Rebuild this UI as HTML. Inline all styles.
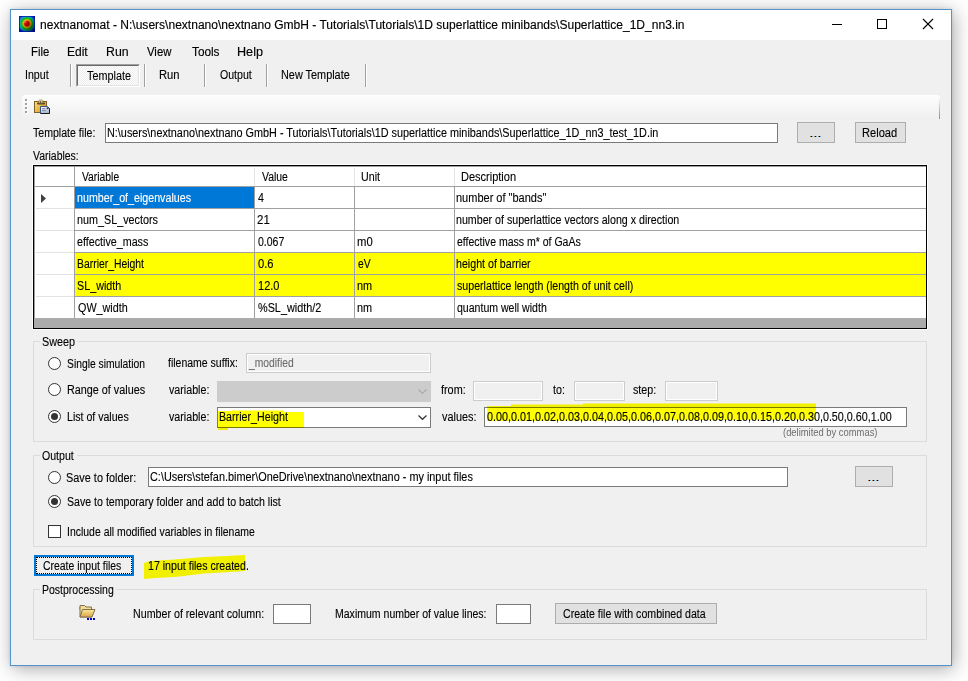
<!DOCTYPE html>
<html><head><meta charset="utf-8"><style>
html,body{margin:0;padding:0;width:968px;height:681px;overflow:hidden;background:#fff}
body>div,body>svg{position:absolute}
.t{font-family:"Liberation Sans",sans-serif;line-height:13px;white-space:pre;transform-origin:0 0}
.s{-webkit-text-stroke:0.12px currentColor}
.s2{-webkit-text-stroke:0.15px currentColor}
</style></head><body>
<div style="left:10px;top:9px;width:942px;height:657px;background:#f0f0f0;box-sizing:border-box;border:1px solid #5593cc;box-shadow:2px 3px 18px rgba(0,0,0,0.34), 0 0 3px rgba(0,0,0,0.12)"></div>
<div style="left:11px;top:10px;width:940px;height:30px;background:#fff"></div>
<svg style="left:19px;top:16px" width="16" height="16" viewBox="0 0 16 16">
<defs><radialGradient id="ig" cx="0.5" cy="0.48" r="0.62">
<stop offset="0" stop-color="#e00000"/><stop offset="0.22" stop-color="#d00000"/><stop offset="0.38" stop-color="#f0c000"/>
<stop offset="0.54" stop-color="#10c010"/><stop offset="0.74" stop-color="#00b0c0"/><stop offset="0.9" stop-color="#0020e0"/><stop offset="1" stop-color="#0010c0"/></radialGradient>
<linearGradient id="sh" x1="0" y1="0" x2="1" y2="1"><stop offset="0" stop-color="#fff" stop-opacity="0.3"/><stop offset="0.35" stop-color="#000" stop-opacity="0"/><stop offset="1" stop-color="#000" stop-opacity="0.75"/></linearGradient>
<radialGradient id="hl" cx="0.38" cy="0.36" r="0.14"><stop offset="0" stop-color="#ff8060" stop-opacity="0.8"/><stop offset="1" stop-color="#ff8060" stop-opacity="0"/></radialGradient></defs>
<rect x="0" y="0" width="16" height="16" fill="url(#ig)"/><rect x="0" y="0" width="16" height="16" fill="url(#sh)"/><rect x="0" y="0" width="16" height="16" fill="url(#hl)"/>
<rect x="0.5" y="0.5" width="15" height="15" fill="none" stroke="#0010b0" stroke-opacity="0.7"/></svg>
<div style="left:832px;top:24px;width:10px;height:1px;background:#000"></div>
<div style="left:877px;top:19px;width:10px;height:10px;box-sizing:border-box;border:1px solid #000"></div>
<svg style="left:922px;top:18px" width="12" height="12" viewBox="0 0 12 12"><path d="M1 1L11 11M11 1L1 11" stroke="#000" stroke-width="1.1" fill="none"/></svg>
<div style="left:70px;top:64px;width:1px;height:23px;background:#a0a0a0"></div>
<div style="left:71px;top:64px;width:1px;height:23px;background:#fff"></div>
<div style="left:144px;top:64px;width:1px;height:23px;background:#a0a0a0"></div>
<div style="left:145px;top:64px;width:1px;height:23px;background:#fff"></div>
<div style="left:204px;top:64px;width:1px;height:23px;background:#a0a0a0"></div>
<div style="left:205px;top:64px;width:1px;height:23px;background:#fff"></div>
<div style="left:266px;top:64px;width:1px;height:23px;background:#a0a0a0"></div>
<div style="left:267px;top:64px;width:1px;height:23px;background:#fff"></div>
<div style="left:365px;top:64px;width:1px;height:23px;background:#a0a0a0"></div>
<div style="left:366px;top:64px;width:1px;height:23px;background:#fff"></div>
<div style="left:76px;top:64px;width:64px;height:23px;box-sizing:border-box;border-top:1px solid #a0a0a0;border-left:1px solid #a0a0a0;border-right:1px solid #fff;border-bottom:1px solid #fff;"></div>
<div style="left:77px;top:65px;width:62px;height:21px;box-sizing:border-box;border-top:1px solid #696969;border-left:1px solid #696969;border-right:1px solid #e3e3e3;border-bottom:1px solid #e3e3e3;background-color:#f8f8f8;background-image:repeating-conic-gradient(#ffffff 0 25%, #ececec 0 50%);background-size:2px 2px"></div>
<div style="left:22px;top:95px;width:918px;height:24px;background:linear-gradient(#fdfdfd,#f5f5f5 60%,#efefef);border-radius:3px 3px 0 0"></div>
<div style="left:939px;top:98px;width:1px;height:21px;background:linear-gradient(rgba(128,128,128,0),#8c8c8c)"></div>
<div style="left:26px;top:100px;width:2px;height:2px;background:#fff"></div>
<div style="left:25px;top:99px;width:2px;height:2px;background:#a0a0a0"></div>
<div style="left:26px;top:104px;width:2px;height:2px;background:#fff"></div>
<div style="left:25px;top:103px;width:2px;height:2px;background:#a0a0a0"></div>
<div style="left:26px;top:108px;width:2px;height:2px;background:#fff"></div>
<div style="left:25px;top:107px;width:2px;height:2px;background:#a0a0a0"></div>
<div style="left:26px;top:112px;width:2px;height:2px;background:#fff"></div>
<div style="left:25px;top:111px;width:2px;height:2px;background:#a0a0a0"></div>
<svg style="left:33px;top:98px" width="18" height="17" viewBox="0 0 18 17">
<defs><linearGradient id="cg" x1="0" y1="0" x2="1" y2="0.6"><stop offset="0" stop-color="#f6e08a"/><stop offset="0.55" stop-color="#e8b840"/><stop offset="1" stop-color="#d89a28"/></linearGradient>
<linearGradient id="dg" x1="0" y1="0" x2="0.3" y2="1"><stop offset="0" stop-color="#ffffff"/><stop offset="1" stop-color="#a8b8d0"/></linearGradient></defs>
<rect x="1.5" y="3.5" width="12" height="11" fill="url(#cg)" stroke="#806028"/>
<rect x="4" y="4.6" width="8" height="2" rx="0.8" fill="#5a4a28"/>
<rect x="6" y="2" width="3.6" height="3" rx="0.5" fill="#f2e49a" stroke="#907040" stroke-width="0.6"/>
<circle cx="7.6" cy="4" r="0.8" fill="#303030"/>
<path d="M7.5 15.5V8.5h7l2 2v5z" fill="url(#dg)" stroke="#3a5080"/>
<path d="M16.5 10.5v5h-9" fill="none" stroke="#1a1a1a"/>
<circle cx="14.6" cy="10.2" r="1" fill="#2a3a60"/>
<path d="M9 10.6h3.5M9 12.6h4" stroke="#6880a8" stroke-width="0.9"/>
</svg>
<div style="left:105px;top:123px;width:673px;height:20px;box-sizing:border-box;border:1px solid #7a7a7a;background:#fff"></div>
<div style="left:797px;top:122px;width:38px;height:21px;box-sizing:border-box;border:1px solid #adadad;background:#e1e1e1"></div>
<div style="left:810px;top:136px;width:1px;height:1px;background:#b07830"></div>
<div style="left:811px;top:136px;width:1px;height:1px;background:#000"></div>
<div style="left:812px;top:136px;width:1px;height:1px;background:#60a8f0"></div>
<div style="left:814px;top:136px;width:1px;height:1px;background:#b07830"></div>
<div style="left:815px;top:136px;width:1px;height:1px;background:#000"></div>
<div style="left:816px;top:136px;width:1px;height:1px;background:#60a8f0"></div>
<div style="left:818px;top:136px;width:1px;height:1px;background:#b07830"></div>
<div style="left:819px;top:136px;width:1px;height:1px;background:#000"></div>
<div style="left:820px;top:136px;width:1px;height:1px;background:#60a8f0"></div>
<div style="left:855px;top:122px;width:51px;height:21px;box-sizing:border-box;border:1px solid #adadad;background:#e1e1e1"></div>
<div style="left:33px;top:165px;width:894px;height:164px;box-sizing:border-box;border:1px solid #000;background:#fff"></div>
<div style="left:32px;top:164px;width:896px;height:166px;box-sizing:border-box;border:1px solid #fff"></div>
<div style="left:34px;top:166px;width:892px;height:1px;background:#a0a0a0"></div>
<div style="left:34px;top:166px;width:1px;height:162px;background:#a0a0a0"></div>
<div style="left:34px;top:186px;width:892px;height:1px;background:#a0a0a0"></div>
<div style="left:254px;top:168px;width:1px;height:18px;background:#e5e5e5"></div>
<div style="left:354px;top:168px;width:1px;height:18px;background:#e5e5e5"></div>
<div style="left:454px;top:168px;width:1px;height:18px;background:#e5e5e5"></div>
<div style="left:74px;top:166px;width:1px;height:152px;background:#a0a0a0"></div>
<div style="left:75px;top:187px;width:179px;height:21px;background:#0078d7"></div>
<div style="left:75px;top:208px;width:851px;height:1px;background:#a0a0a0"></div>
<div style="left:36px;top:208px;width:38px;height:1px;background:#e3e3e3"></div>
<div style="left:254px;top:187px;width:1px;height:22px;background:#a0a0a0"></div>
<div style="left:354px;top:187px;width:1px;height:22px;background:#a0a0a0"></div>
<div style="left:454px;top:187px;width:1px;height:22px;background:#a0a0a0"></div>
<div style="left:75px;top:230px;width:851px;height:1px;background:#a0a0a0"></div>
<div style="left:36px;top:230px;width:38px;height:1px;background:#e3e3e3"></div>
<div style="left:254px;top:209px;width:1px;height:22px;background:#a0a0a0"></div>
<div style="left:354px;top:209px;width:1px;height:22px;background:#a0a0a0"></div>
<div style="left:454px;top:209px;width:1px;height:22px;background:#a0a0a0"></div>
<div style="left:75px;top:252px;width:851px;height:1px;background:#a0a0a0"></div>
<div style="left:36px;top:252px;width:38px;height:1px;background:#e3e3e3"></div>
<div style="left:254px;top:231px;width:1px;height:22px;background:#a0a0a0"></div>
<div style="left:354px;top:231px;width:1px;height:22px;background:#a0a0a0"></div>
<div style="left:454px;top:231px;width:1px;height:22px;background:#a0a0a0"></div>
<div style="left:75px;top:253px;width:851px;height:21px;background:#ffff00"></div>
<div style="left:75px;top:274px;width:851px;height:1px;background:#a0a0a0"></div>
<div style="left:36px;top:274px;width:38px;height:1px;background:#e3e3e3"></div>
<div style="left:254px;top:253px;width:1px;height:22px;background:#a0a0a0"></div>
<div style="left:354px;top:253px;width:1px;height:22px;background:#a0a0a0"></div>
<div style="left:454px;top:253px;width:1px;height:22px;background:#a0a0a0"></div>
<div style="left:75px;top:275px;width:851px;height:21px;background:#ffff00"></div>
<div style="left:75px;top:296px;width:851px;height:1px;background:#a0a0a0"></div>
<div style="left:36px;top:296px;width:38px;height:1px;background:#e3e3e3"></div>
<div style="left:254px;top:275px;width:1px;height:22px;background:#a0a0a0"></div>
<div style="left:354px;top:275px;width:1px;height:22px;background:#a0a0a0"></div>
<div style="left:454px;top:275px;width:1px;height:22px;background:#a0a0a0"></div>
<div style="left:75px;top:318px;width:851px;height:1px;background:#a0a0a0"></div>
<div style="left:254px;top:297px;width:1px;height:22px;background:#a0a0a0"></div>
<div style="left:354px;top:297px;width:1px;height:22px;background:#a0a0a0"></div>
<div style="left:454px;top:297px;width:1px;height:22px;background:#a0a0a0"></div>
<div style="left:34px;top:318px;width:892px;height:10px;background:#ababab"></div>
<svg style="left:40px;top:193px" width="8" height="11" viewBox="0 0 8 11"><path d="M1 1L6 5.5L1 10z" fill="#404040"/></svg>
<div style="left:33px;top:341px;width:894px;height:101px;box-sizing:border-box;border:1px solid #dcdcdc"></div>
<div style="left:40px;top:339px;width:37px;height:5px;background:#f0f0f0"></div>
<svg style="left:48.0px;top:357.0px" width="13" height="13" viewBox="0 0 13 13"><circle cx="6.5" cy="6.5" r="6" fill="#fff" stroke="#333" stroke-width="1"/></svg>
<svg style="left:48.0px;top:383.0px" width="13" height="13" viewBox="0 0 13 13"><circle cx="6.5" cy="6.5" r="6" fill="#fff" stroke="#333" stroke-width="1"/></svg>
<svg style="left:48.0px;top:410.0px" width="13" height="13" viewBox="0 0 13 13"><circle cx="6.5" cy="6.5" r="6" fill="#fff" stroke="#333" stroke-width="1"/><circle cx="6.5" cy="6.5" r="3.5" fill="#333"/></svg>
<div style="left:246px;top:353px;width:185px;height:20px;box-sizing:border-box;border:1px solid #cccccc;background:#f0f0f0;box-shadow:inset 0 0 0 1px #fff"></div>
<div style="left:217px;top:381px;width:214px;height:21px;background:#cccccc"></div>
<svg style="left:417px;top:387px" width="11" height="8" viewBox="0 0 11 8"><path d="M1.5 2.5L5.5 6.3L9.5 2.5" stroke="#a8a8a8" stroke-width="1.1" fill="none"/></svg>
<div style="left:217px;top:407px;width:214px;height:21px;box-sizing:border-box;border:1px solid #7a7a7a;background:#fff"></div>
<svg style="left:417px;top:413px" width="11" height="8" viewBox="0 0 11 8"><path d="M1.5 2.5L5.5 6.3L9.5 2.5" stroke="#333" stroke-width="1.2" fill="none"/></svg>
<div style="left:473px;top:381px;width:70px;height:20px;box-sizing:border-box;border:1px solid #cccccc;background:#f0f0f0;box-shadow:inset 0 0 0 1px #fff"></div>
<div style="left:574px;top:381px;width:51px;height:20px;box-sizing:border-box;border:1px solid #cccccc;background:#f0f0f0;box-shadow:inset 0 0 0 1px #fff"></div>
<div style="left:665px;top:381px;width:53px;height:20px;box-sizing:border-box;border:1px solid #cccccc;background:#f0f0f0;box-shadow:inset 0 0 0 1px #fff"></div>
<div style="left:484px;top:407px;width:423px;height:20px;box-sizing:border-box;border:1px solid #7a7a7a;background:#fff"></div>
<div style="left:33px;top:455px;width:894px;height:92px;box-sizing:border-box;border:1px solid #dcdcdc"></div>
<div style="left:40px;top:453px;width:37px;height:5px;background:#f0f0f0"></div>
<svg style="left:48.0px;top:471.0px" width="13" height="13" viewBox="0 0 13 13"><circle cx="6.5" cy="6.5" r="6" fill="#fff" stroke="#333" stroke-width="1"/></svg>
<svg style="left:48.0px;top:495.0px" width="13" height="13" viewBox="0 0 13 13"><circle cx="6.5" cy="6.5" r="6" fill="#fff" stroke="#333" stroke-width="1"/><circle cx="6.5" cy="6.5" r="3.5" fill="#333"/></svg>
<div style="left:148px;top:467px;width:640px;height:20px;box-sizing:border-box;border:1px solid #7a7a7a;background:#fff"></div>
<div style="left:855px;top:466px;width:38px;height:21px;box-sizing:border-box;border:1px solid #adadad;background:#e1e1e1"></div>
<div style="left:868px;top:480px;width:1px;height:1px;background:#b07830"></div>
<div style="left:869px;top:480px;width:1px;height:1px;background:#000"></div>
<div style="left:870px;top:480px;width:1px;height:1px;background:#60a8f0"></div>
<div style="left:872px;top:480px;width:1px;height:1px;background:#b07830"></div>
<div style="left:873px;top:480px;width:1px;height:1px;background:#000"></div>
<div style="left:874px;top:480px;width:1px;height:1px;background:#60a8f0"></div>
<div style="left:876px;top:480px;width:1px;height:1px;background:#b07830"></div>
<div style="left:877px;top:480px;width:1px;height:1px;background:#000"></div>
<div style="left:878px;top:480px;width:1px;height:1px;background:#60a8f0"></div>
<div style="left:48px;top:525px;width:13px;height:13px;box-sizing:border-box;border:1px solid #333;background:#fff"></div>
<div style="left:34px;top:555px;width:100px;height:21px;box-sizing:border-box;border:2px solid #0078d7;background:#f0f0f0"></div>
<div style="left:36px;top:557px;width:96px;height:17px;box-sizing:border-box;border:1px dotted #000"></div>
<div style="left:33px;top:589px;width:894px;height:51px;box-sizing:border-box;border:1px solid #dcdcdc"></div>
<div style="left:40px;top:587px;width:76px;height:5px;background:#f0f0f0"></div>
<svg style="left:79px;top:604px" width="18" height="18" viewBox="0 0 18 18">
<defs><linearGradient id="fg" x1="0" y1="0" x2="0" y2="1"><stop offset="0" stop-color="#fbe7a0"/><stop offset="1" stop-color="#dca640"/></linearGradient></defs>
<path d="M1 1.5h4.5l1.5 1.5h5.5v2.5h-11.5z" fill="#f4dc90" stroke="#807050"/>
<path d="M1 3v10h11.5" fill="#f6e4a0" stroke="#807050"/>
<path d="M3.5 5.5h12.5l-3 7.5h-12z" fill="url(#fg)" stroke="#807050"/>
<rect x="8" y="14" width="2" height="2" fill="#0000c0"/><rect x="11" y="14" width="2" height="2" fill="#0000c0"/><rect x="14" y="14" width="2" height="2" fill="#0000c0"/>
</svg>
<div style="left:273px;top:604px;width:38px;height:20px;box-sizing:border-box;border:1px solid #7a7a7a;background:#fff"></div>
<div style="left:496px;top:604px;width:35px;height:20px;box-sizing:border-box;border:1px solid #7a7a7a;background:#fff"></div>
<div style="left:555px;top:603px;width:162px;height:21px;box-sizing:border-box;border:1px solid #adadad;background:#e1e1e1"></div>
<div class="t s2" style="left:40.00px;top:19px;font-size:12px;color:#000;transform:scaleX(1.0031);">nextnanomat - N:\users\nextnano\nextnano GmbH - Tutorials\Tutorials\1D superlattice minibands\Superlattice_1D_nn3.in</div>
<div class="t s2" style="left:31.06px;top:46px;font-size:12px;color:#000;transform:scaleX(0.9444);">File</div>
<div class="t s2" style="left:67.00px;top:46px;font-size:12px;color:#000;">Edit</div>
<div class="t s2" style="left:105.97px;top:46px;font-size:12px;color:#000;transform:scaleX(1.0250);">Run</div>
<div class="t s2" style="left:147.00px;top:46px;font-size:12px;color:#000;transform:scaleX(0.9462);">View</div>
<div class="t s2" style="left:191.50px;top:46px;font-size:12px;color:#000;transform:scaleX(0.9821);">Tools</div>
<div class="t s2" style="left:237.45px;top:46px;font-size:12px;color:#000;transform:scaleX(1.0522);">Help</div>
<div class="t s" style="left:25.12px;top:69px;font-size:12px;color:#000;transform:scaleX(0.8846);">Input</div>
<div class="t s" style="left:87.00px;top:70px;font-size:12px;color:#000;transform:scaleX(0.9021);">Template</div>
<div class="t s" style="left:159.06px;top:69px;font-size:12px;color:#000;transform:scaleX(0.9350);">Run</div>
<div class="t s" style="left:219.50px;top:69px;font-size:12px;color:#000;transform:scaleX(0.8806);">Output</div>
<div class="t s" style="left:281.09px;top:69px;font-size:12px;color:#000;transform:scaleX(0.9067);">New Template</div>
<div class="t s" style="left:33.00px;top:127px;font-size:12px;color:#000;transform:scaleX(0.8814);">Template file:</div>
<div class="t s" style="left:107.10px;top:127px;font-size:12px;color:#000;transform:scaleX(0.9031);">N:\users\nextnano\nextnano GmbH - Tutorials\Tutorials\1D superlattice minibands\Superlattice_1D_nn3_test_1D.in</div>
<div class="t s" style="left:862.08px;top:127px;font-size:12px;color:#000;transform:scaleX(0.9250);">Reload</div>
<div class="t s" style="left:33.00px;top:150px;font-size:12px;color:#000;transform:scaleX(0.8712);">Variables:</div>
<div class="t s" style="left:76.51px;top:192px;font-size:12px;color:#fff;transform:scaleX(0.8898);">number_of_eigenvalues</div>
<div class="t s" style="left:257.80px;top:192px;font-size:12px;color:#000;transform:scaleX(0.8900);">4</div>
<div class="t s" style="left:456.38px;top:192px;font-size:12px;color:#000;transform:scaleX(0.9165);">number of &quot;bands&quot;</div>
<div class="t s" style="left:76.50px;top:214px;font-size:12px;color:#000;transform:scaleX(0.8989);">num_SL_vectors</div>
<div class="t s" style="left:256.84px;top:214px;font-size:12px;color:#000;transform:scaleX(0.9583);">21</div>
<div class="t s" style="left:456.41px;top:214px;font-size:12px;color:#000;transform:scaleX(0.8880);">number of superlattice vectors along x direction</div>
<div class="t s" style="left:77.40px;top:236px;font-size:12px;color:#000;transform:scaleX(0.8937);">effective_mass</div>
<div class="t s" style="left:258.20px;top:236px;font-size:12px;color:#000;transform:scaleX(0.8767);">0.067</div>
<div class="t s" style="left:356.96px;top:236px;font-size:12px;color:#000;transform:scaleX(0.9400);">m0</div>
<div class="t s" style="left:457.30px;top:236px;font-size:12px;color:#000;transform:scaleX(0.8766);">effective mass m* of GaAs</div>
<div class="t s" style="left:77.33px;top:258px;font-size:12px;color:#000;transform:scaleX(0.8658);">Barrier_Height</div>
<div class="t s" style="left:258.20px;top:258px;font-size:12px;color:#000;transform:scaleX(0.9313);">0.6</div>
<div class="t s" style="left:357.90px;top:258px;font-size:12px;color:#000;transform:scaleX(0.8667);">eV</div>
<div class="t s" style="left:456.41px;top:258px;font-size:12px;color:#000;transform:scaleX(0.8880);">height of barrier</div>
<div class="t s" style="left:77.30px;top:280px;font-size:12px;color:#000;transform:scaleX(0.8958);">SL_width</div>
<div class="t s" style="left:257.68px;top:280px;font-size:12px;color:#000;transform:scaleX(0.9182);">12.0</div>
<div class="t s" style="left:356.99px;top:280px;font-size:12px;color:#000;transform:scaleX(0.9067);">nm</div>
<div class="t s" style="left:457.30px;top:280px;font-size:12px;color:#000;transform:scaleX(0.8869);">superlattice length (length of unit cell)</div>
<div class="t s" style="left:77.60px;top:302px;font-size:12px;color:#000;transform:scaleX(0.8982);">QW_width</div>
<div class="t s" style="left:258.00px;top:302px;font-size:12px;color:#000;transform:scaleX(0.9029);">%SL_width/2</div>
<div class="t s" style="left:356.99px;top:302px;font-size:12px;color:#000;transform:scaleX(0.9067);">nm</div>
<div class="t s" style="left:457.30px;top:302px;font-size:12px;color:#000;transform:scaleX(0.8794);">quantum well width</div>
<div class="t s" style="left:82.00px;top:171px;font-size:12px;color:#000;transform:scaleX(0.8605);">Variable</div>
<div class="t s" style="left:262.30px;top:171px;font-size:12px;color:#000;transform:scaleX(0.8700);">Value</div>
<div class="t s" style="left:361.31px;top:171px;font-size:12px;color:#000;transform:scaleX(0.8900);">Unit</div>
<div class="t s" style="left:460.78px;top:171px;font-size:12px;color:#000;transform:scaleX(0.9172);">Description</div>
<div class="t s" style="left:41.60px;top:336px;font-size:12px;color:#000;transform:scaleX(0.9000);">Sweep</div>
<div class="t s" style="left:66.64px;top:358px;font-size:12px;color:#000;transform:scaleX(0.8596);">Single simulation</div>
<div class="t s" style="left:66.60px;top:384px;font-size:12px;color:#000;transform:scaleX(0.9000);">Range of values</div>
<div class="t s" style="left:66.62px;top:411px;font-size:12px;color:#000;transform:scaleX(0.8812);">List of values</div>
<div class="t s" style="left:168.20px;top:357px;font-size:12px;color:#000;transform:scaleX(0.8747);">filename suffix:</div>
<div class="t s" style="left:249.10px;top:357px;font-size:12px;color:#6d6d6d;transform:scaleX(0.8588);">_modified</div>
<div class="t s" style="left:169.00px;top:384px;font-size:12px;color:#000;transform:scaleX(0.8909);">variable:</div>
<div class="t s" style="left:169.00px;top:411px;font-size:12px;color:#000;transform:scaleX(0.8909);">variable:</div>
<div class="t s" style="left:219.11px;top:411px;font-size:12px;color:#000;transform:scaleX(0.8900);">Barrier_Height</div>
<div class="t s" style="left:441.00px;top:384px;font-size:12px;color:#000;transform:scaleX(0.9038);">from:</div>
<div class="t s" style="left:553.40px;top:384px;font-size:12px;color:#000;transform:scaleX(0.8900);">to:</div>
<div class="t s" style="left:632.60px;top:384px;font-size:12px;color:#000;transform:scaleX(0.8900);">step:</div>
<div class="t s" style="left:441.70px;top:411px;font-size:12px;color:#000;transform:scaleX(0.9054);">values:</div>
<div class="t s" style="left:487.00px;top:411px;font-size:12px;color:#000;transform:scaleX(0.8989);">0.00,0.01,0.02,0.03,0.04,0.05,0.06,0.07,0.08,0.09,0.10,0.15,0.20,0.30,0.50,0.60,1.00</div>
<div class="t" style="left:783.06px;top:426px;font-size:10px;color:#6d6d6d;transform:scaleX(0.9394);">(delimited by commas)</div>
<div class="t s" style="left:41.50px;top:450px;font-size:12px;color:#000;transform:scaleX(0.8806);">Output</div>
<div class="t s" style="left:66.39px;top:472px;font-size:12px;color:#000;transform:scaleX(0.9080);">Save to folder:</div>
<div class="t s" style="left:149.59px;top:471px;font-size:12px;color:#000;transform:scaleX(0.9065);">C:\Users\stefan.bimer\OneDrive\nextnano\nextnano - my input files</div>
<div class="t s" style="left:66.52px;top:496px;font-size:12px;color:#000;transform:scaleX(0.8830);">Save to temporary folder and add to batch list</div>
<div class="t s" style="left:66.53px;top:526px;font-size:12px;color:#000;transform:scaleX(0.8715);">Include all modified variables in filename</div>
<div class="t s" style="left:42.73px;top:560px;font-size:12px;color:#000;transform:scaleX(0.8697);">Create input files</div>
<div class="t s" style="left:148.12px;top:560px;font-size:12px;color:#000;transform:scaleX(0.8839);">17 input files created.</div>
<div class="t s" style="left:41.62px;top:584px;font-size:12px;color:#000;transform:scaleX(0.8750);">Postprocessing</div>
<div class="t s" style="left:132.51px;top:608px;font-size:12px;color:#000;transform:scaleX(0.8897);">Number of relevant column:</div>
<div class="t s" style="left:335.32px;top:608px;font-size:12px;color:#000;transform:scaleX(0.8772);">Maximum number of value lines:</div>
<div class="t s" style="left:562.92px;top:608px;font-size:12px;color:#000;transform:scaleX(0.8838);">Create file with combined data</div>
<svg style="left:0;top:0;mix-blend-mode:multiply" width="968" height="681" viewBox="0 0 968 681">
<path fill="#ffff00" d="M218 411L232 411L232 410.5L284 410.5L284 412L304 412L304 428L228 428L228 430L218 430z"/>
<path fill="#ffff00" d="M487 406L511 406L511 404.5L583 404.5L583 403.5L816 403.5L816 419.5L487 421z"/>
<path fill="#ffff00" d="M144 579L144 563L150 561L175 559.5L204 557L227 556L245 555L245 571L230 572L204 573.5L175 577L155 578z"/>
</svg>
</body></html>
